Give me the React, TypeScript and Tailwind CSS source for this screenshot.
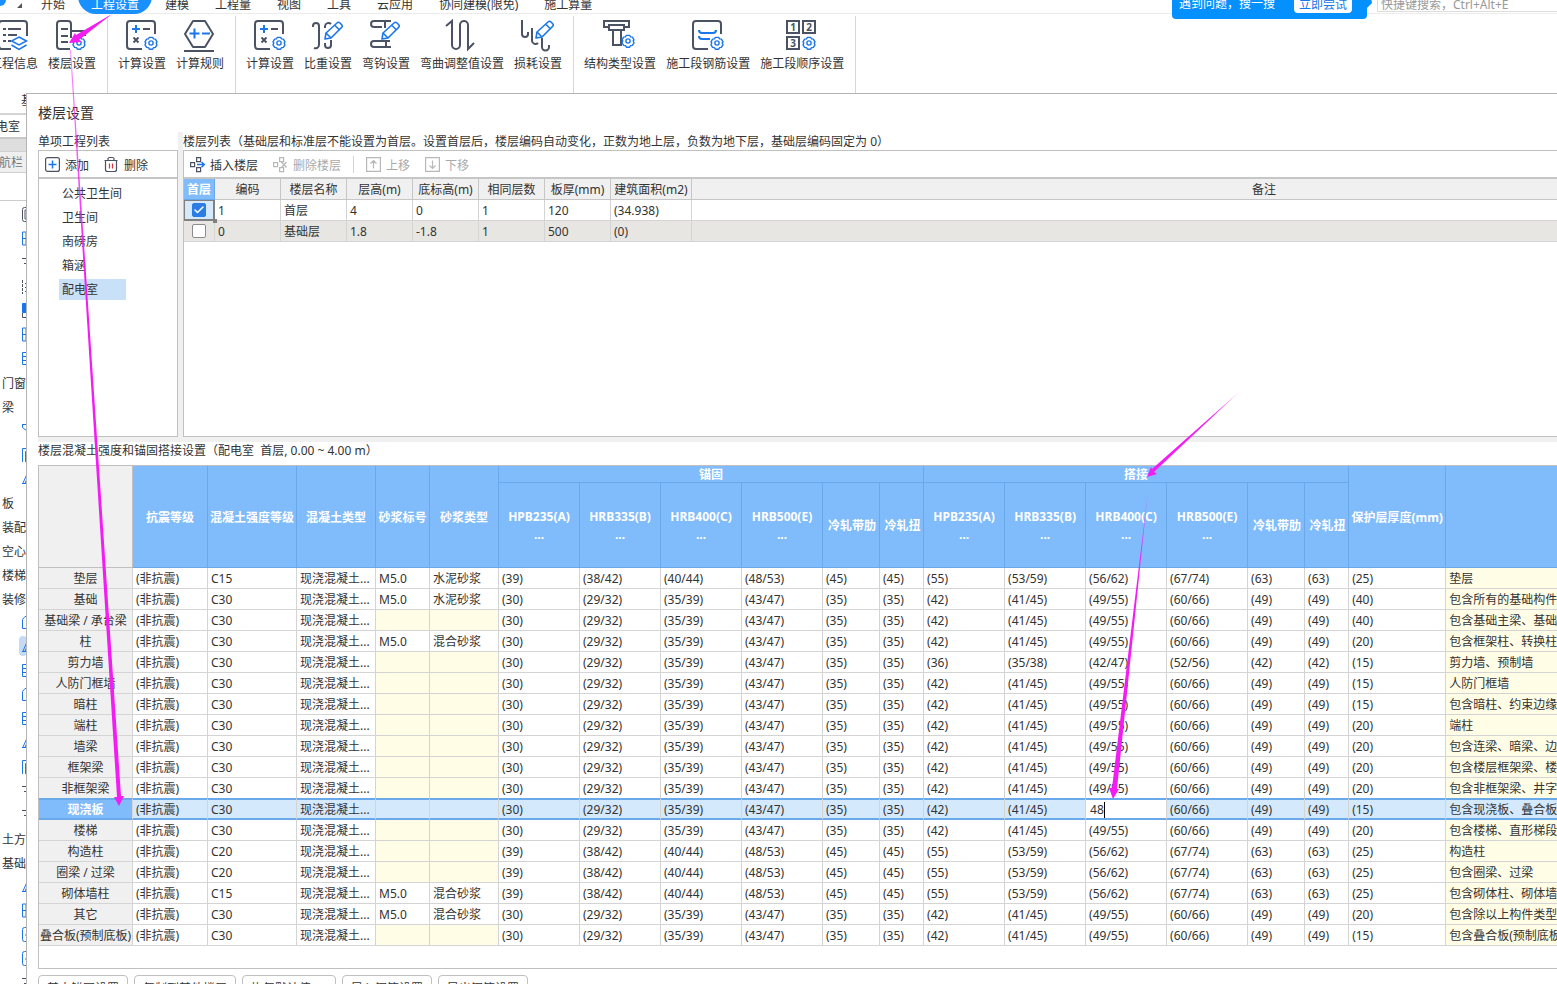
import { ReactNode, useState } from "react";
import clsx from "clsx";
import { Check } from "lucide-react";

const DARK = "#4b5263";
const BLUE = "#1a76ea";

const MENU = ["开始", "工程设置", "建模", "工程量", "视图", "工具", "云应用", "协同建模(限免)", "施工算量"];
const PROJECTS = ["公共卫生间", "卫生间", "南磅房", "箱涵", "配电室"];

// ---------- icons ----------

function Icon({ children, size = 30 }: { children: ReactNode; size?: number }) {
  return (
    <svg
      width={size}
      height={size}
      viewBox={`0 0 ${size} ${size}`}
      fill="none"
      stroke={DARK}
      strokeWidth={size === 30 ? 2 : 1.2}
      className="shrink-0 overflow-visible"
      aria-hidden="true"
    >
      {children}
    </svg>
  );
}

function Gear({ x, y }: { x: number; y: number }) {
  return (
    <g transform={`translate(${x} ${y})`} stroke={BLUE} strokeWidth="1.4" strokeLinejoin="round">
      <path d="M-1.6-5.6h3.2l1 1.5 1.8.2 1.6 2.8-.8 1.1.8 1.8-1.6 2.6-1.8.2-1 1.6h-3.2l-1-1.6-1.8-.2L-6 1.8-5.2 0-6-1.1l1.6-2.8 1.8-.2z" />
      <circle r="2.1" />
    </g>
  );
}

function Pencil({ x, y }: { x: number; y: number }) {
  return (
    <g transform={`translate(${x} ${y})`} stroke={BLUE} strokeWidth="1.6" strokeLinejoin="round">
      <path fill="#fff" d="M0 17l1-6L12 1q1.500-1.500 3 0l1.500 1.500q1.500 1.500 0 3L6 16z" />
      <path d="M10 3.500l4.500 4.500M1 11l5 5" />
    </g>
  );
}

const OPEN_BOX = "M29 14V4a3 3 0 0 0-3-3H4a3 3 0 0 0-3 3v22a3 3 0 0 0 3 3h12";

const calcIcon = (
  <Icon>
    <path d={OPEN_BOX} />
    <path d="M7.500 17.500l5 5M12.500 17.500l-5 5M17 9h7" />
    <path stroke={BLUE} d="M6 9h8M10 5v8" />
    <Gear x={25} y={23} />
  </Icon>
);

type Tool = { label: string; icon: ReactNode };

const RIBBON: Tool[][] = [
  [
    {
      label: "工程信息",
      icon: (
        <Icon>
          <path d="M29 16V4a3 3 0 0 0-3-3H4a3 3 0 0 0-3 3v22a3 3 0 0 0 3 3h9" />
          <path d="M5 9h3M10 9h13M5 15h3M10 15h9M5 21h3M10 21h3" />
          <path stroke={BLUE} strokeWidth="1.5" d="M21 17l7.500 4-7.500 4-7.500-4zM13.500 25l7.500 4.500 7.500-4.500" />
        </Icon>
      ),
    },
    {
      label: "楼层设置",
      icon: (
        <Icon>
          <path d="M14 29H4a3 3 0 0 1-3-3V4a3 3 0 0 1 3-3h8a3 3 0 0 1 3 3v14M15 11h12a2 2 0 0 1 2 2v3M5 9h7M5 16h7M5 22h7" />
          <Gear x={23} y={23} />
        </Icon>
      ),
    },
  ],
  [
    { label: "计算设置", icon: calcIcon },
    {
      label: "计算规则",
      icon: (
        <Icon>
          <path strokeLinejoin="round" d="M9 1h12l8 13-8 13H9L1 14zM0 31h30" />
          <path d="M5.500 13.500h10M10.500 8.500v10M18 13.500h8" stroke={BLUE} />
        </Icon>
      ),
    },
  ],
  [
    { label: "计算设置", icon: calcIcon },
    {
      label: "比重设置",
      icon: (
        <Icon>
          <path d="M1 7V6a3 3 0 0 1 6 0v19a3.500 3.500 0 0 1-5 3M13 8V6a3.500 3.500 0 0 1 6-2M19 20v5a3 3 0 0 1-6 0v-2" />
          <Pencil x={13} y={2} />
        </Icon>
      ),
    },
    {
      label: "弯钩设置",
      icon: (
        <Icon>
          <path d="M9 1H4a3 3 0 0 0 0 6h8M8 1h13M15 1v7M12 21H4a3 3 0 0 0 0 6h7M11 21h9M16 21v6M11 27h10" />
          <Pencil x={12} y={2} />
        </Icon>
      ),
    },
    {
      label: "弯曲调整值设置",
      icon: (
        <Icon>
          <path d="M0 6l6-5v24a4 4 0 0 0 8 0V5a4 4 0 0 1 8 0v24l6-6" />
        </Icon>
      ),
    },
    {
      label: "损耗设置",
      icon: (
        <Icon>
          <path d="M0 0v14a3 3 0 0 0 6 0v-2M10 8v13a3.500 3.500 0 0 0 6 2M20 18v9a3.500 3.500 0 0 0 7 0v-2" />
          <Pencil x={14} y={1} />
        </Icon>
      ),
    },
  ],
  [
    {
      label: "结构类型设置",
      icon: (
        <Icon>
          <path d="M5 7H0V1h25v6h-5M5 5h15v5H5zM9 10v15h8V10" />
          <Gear x={24} y={21} />
        </Icon>
      ),
    },
    {
      label: "施工段钢筋设置",
      icon: (
        <Icon>
          <path d={OPEN_BOX} />
          <path stroke={BLUE} d="M7 10q0 3 3 3h11q3 0 3-3M7 16q0 3 3 3h8" />
          <Gear x={25} y={23} />
        </Icon>
      ),
    },
    {
      label: "施工段顺序设置",
      icon: (
        <Icon>
          <path d="M1 1h12v12H1zM17 1h12v12H17zM1 17h12v12H1z" />
          <g fill={DARK} stroke="none" fontSize="10" fontWeight="700" textAnchor="middle">
            <text x="7" y="11">1</text>
            <text x="23" y="11">2</text>
            <text x="7" y="27">3</text>
          </g>
          <Gear x={23} y={23} />
        </Icon>
      ),
    },
  ],
];

// glyphs of the component tree, only their left edge shows beside the dialog
const TREE_GLYPHS: Record<string, ReactNode> = {
  box: <path stroke={DARK} d="M12 .5H2.500a2 2 0 0 0-2 2v10a2 2 0 0 0 2 2H12M3 3h9v9H3z" />,
  grid: <path d="M12 1H.5v13H12M.5 7.500H12M4 1v13" />,
  tee: <path stroke={DARK} d="M0 3.500h12M2 8.500h8M5 3v9" />,
  dots: <path stroke={DARK} d="M.5 1v14M3 4.500h9M3 8.500h9M3 12.500h9" strokeDasharray="3 1" />,
  fill: (
    <>
      <path fill={BLUE} d="M.5.500H12v9H.5z" />
      <path stroke={DARK} d="M.5 10v4.500H12" />
    </>
  ),
  rows: <path d="M12 1.500H.5v12H12M.5 5.500H12M.5 9.500H12" />,
  funnel: <path d="M0 1.500h12M.5 1.500v3l4 3v8" />,
  door: <path d="M.5 15V1.500H12M3.500 15V4.500H12" />,
  slope: <path d="M0 12.500h12M1 12l4-9M3 12l3-6" />,
  page: <path d="M12 1.500H3l-2.500 3v9H12" />,
  card: <path d="M12 .5H2.500a2 2 0 0 0-2 2v10a2 2 0 0 0 2 2H12M3 8h2" />,
};

const TREE = [
  "#box", "#grid", "#tee", "#dots", "#fill", "#grid", "#rows", "门窗", "梁", "#funnel", "#door", "#slope",
  "板", "装配", "空心", "楼梯", "装修", "#page", "#slope*", "#rows", "#page", "#rows", "#slope", "#door",
  "#tee", "#tee", "土方", "基础", "#slope", "#grid", "#card", "#card", "#tee",
];

// ---------- table data ----------

const FLOOR_COLS = ["编码", "楼层名称", "层高(m)", "底标高(m)", "相同层数", "板厚(mm)", "建筑面积(m2)", "备注"];
const FLOORS = [
  ["1", "首层", "4", "0", "1", "120", "(34.938)", ""],
  ["0", "基础层", "1.8", "-1.8", "1", "500", "(0)", ""],
];

const STEEL = ["HPB235(A)", "HRB335(B)", "HRB400(C)", "HRB500(E)", "冷轧带肋", "冷轧扭"];
const A30 = ["(30)", "(29/32)", "(35/39)", "(43/47)", "(35)", "(35)"];
const A39 = ["(39)", "(38/42)", "(40/44)", "(48/53)", "(45)", "(45)"];
const L36 = ["(36)", "(35/38)", "(42/47)", "(52/56)", "(42)", "(42)"];
const L42 = ["(42)", "(41/45)", "(49/55)", "(60/66)", "(49)", "(49)"];
const L55 = ["(55)", "(53/59)", "(56/62)", "(67/74)", "(63)", "(63)"];

type Member = {
  name: string;
  grade: string;
  mortar?: string;
  anchor: string[];
  lap: string[];
  cover: string;
  note: string;
};

const MEMBERS: Member[] = [
  { name: "垫层", grade: "C15", mortar: "水泥砂浆", anchor: A39, lap: L55, cover: "(25)", note: "垫层" },
  { name: "基础", grade: "C30", mortar: "水泥砂浆", anchor: A30, lap: L42, cover: "(40)", note: "包含所有的基础构件" },
  { name: "基础梁 / 承台梁", grade: "C30", anchor: A30, lap: L42, cover: "(40)", note: "包含基础主梁、基础" },
  { name: "柱", grade: "C30", mortar: "混合砂浆", anchor: A30, lap: L42, cover: "(20)", note: "包含框架柱、转换柱" },
  { name: "剪力墙", grade: "C30", anchor: A30, lap: L36, cover: "(15)", note: "剪力墙、预制墙" },
  { name: "人防门框墙", grade: "C30", anchor: A30, lap: L42, cover: "(15)", note: "人防门框墙" },
  { name: "暗柱", grade: "C30", anchor: A30, lap: L42, cover: "(15)", note: "包含暗柱、约束边缘" },
  { name: "端柱", grade: "C30", anchor: A30, lap: L42, cover: "(20)", note: "端柱" },
  { name: "墙梁", grade: "C30", anchor: A30, lap: L42, cover: "(20)", note: "包含连梁、暗梁、边" },
  { name: "框架梁", grade: "C30", anchor: A30, lap: L42, cover: "(20)", note: "包含楼层框架梁、楼" },
  { name: "非框架梁", grade: "C30", anchor: A30, lap: L42, cover: "(20)", note: "包含非框架梁、井字" },
  { name: "现浇板", grade: "C30", anchor: A30, lap: L42, cover: "(15)", note: "包含现浇板、叠合板" },
  { name: "楼梯", grade: "C30", anchor: A30, lap: L42, cover: "(20)", note: "包含楼梯、直形梯段" },
  { name: "构造柱", grade: "C20", anchor: A39, lap: L55, cover: "(25)", note: "构造柱" },
  { name: "圈梁 / 过梁", grade: "C20", anchor: A39, lap: L55, cover: "(25)", note: "包含圈梁、过梁" },
  { name: "砌体墙柱", grade: "C15", mortar: "混合砂浆", anchor: A39, lap: L55, cover: "(25)", note: "包含砌体柱、砌体墙" },
  { name: "其它", grade: "C30", mortar: "混合砂浆", anchor: A30, lap: L42, cover: "(20)", note: "包含除以上构件类型" },
  { name: "叠合板(预制底板)", grade: "C30", anchor: A30, lap: L42, cover: "(15)", note: "包含叠合板(预制底板)" },
];

const ACTIVE = 11;
const ACTIONS = ["基本锚固设置", "复制到其他楼层", "恢复默认值(D)", "导入钢筋设置", "导出钢筋设置"];

function TopBar() {
  return (
    <header className="flex h-3.5 shrink-0 border-b border-[#ececec]">
      <div className="flex w-7 shrink-0 items-start">
        <span className="h-1.5 w-1.5 rounded-br-full bg-[#1890ff]" />
        <svg width="5" height="5" viewBox="0 0 5 5" className="mt-[3px] ml-[11px]" aria-hidden="true">
          <path d="M5 0v5H0z" fill="#555" />
        </svg>
      </div>
      <nav className="-mt-1 flex h-[18px] shrink-0">
        {MENU.map((m) => (
          <button
            key={m}
            className={clsx(
              "px-[13px] leading-[18px] whitespace-nowrap",
              m === "工程设置" && "rounded-b-full bg-[#1890ff] text-white",
            )}
          >
            {m}
          </button>
        ))}
      </nav>
      <div className="z-10 ml-auto flex h-[19px] shrink-0">
        <div className="flex items-start rounded-b-sm bg-[#0590ff] pr-[15px] pl-[7px] text-white">
          <span className="-mt-1 leading-4">遇到问题，搜一搜</span>
          <button className="-mt-1 ml-[19px] h-[17px] rounded-sm bg-white px-[5px] leading-4 text-[#1677e8]">
            立即尝试
          </button>
        </div>
        <svg width="5" height="8" viewBox="0 0 5 8" aria-hidden="true">
          <path d="M0 0h4.500l.5 3-5 5z" fill="#0590ff" />
        </svg>
        <input
          aria-label="快捷键搜索"
          placeholder="快捷键搜索，Ctrl+Alt+E"
          className="-mt-2 ml-[5px] h-5 w-[180px] border border-r-0 border-[#ddd] bg-white px-[3px] pt-1 placeholder:text-[#999]"
        />
      </div>
    </header>
  );
}

function Ribbon() {
  return (
    <div className="flex h-[79px] shrink-0 pt-0.5">
      {RIBBON.map((group, i) => (
        <div
          key={i}
          className={clsx(
            "flex shrink-0 justify-end border-r border-[#d6d6d6] pr-1.5 pl-[5px]",
            i === 0 && "w-[108px] overflow-hidden",
          )}
        >
          {group.map((t) => (
            <button key={t.label} className="flex shrink-0 flex-col items-center px-[5px] pt-1">
              <span className="pr-0.5">{t.icon}</span>
              <span className="mt-[5px] leading-[18px] whitespace-nowrap">{t.label}</span>
            </button>
          ))}
        </div>
      ))}
    </div>
  );
}

function Sidebar() {
  return (
    <aside className="w-[26px] shrink-0 overflow-hidden whitespace-nowrap">
      <div className="h-5 pt-px pl-[21px] leading-[14px]">基</div>
      <div className="h-[26px] border-y-2 border-t-[#d4d4d4] border-b-[#c8c8c8] leading-[23px]">
        <span className="-ml-1">电室</span>
      </div>
      <div className="h-3 bg-[#dedede]" />
      <div className="h-[22px] border-y border-[#cfcfcf] bg-[#efefef] leading-[21px] text-[#777]">
        <span className="-ml-px">航栏</span>
      </div>
      <div className="h-7 border-b border-[#ccc]" />
      <ul className="pt-[3px]">
        {TREE.map((t, i) =>
          t[0] === "#" ? (
            <li key={i} className="flex h-6 items-start">
              <span className={clsx("ml-[19px] flex h-5 w-2 items-center rounded-sm pl-[3px]", t.endsWith("*") && "bg-[#c5dbf5]")}>
                <svg width="12" height="15" viewBox="0 0 12 15" fill="none" stroke={BLUE} className="shrink-0" aria-hidden="true">
                  {TREE_GLYPHS[t.replace(/[#*]/g, "")]}
                </svg>
              </span>
            </li>
          ) : (
            <li key={i} className="h-6 pl-0.5 leading-6">
              {t}
            </li>
          ),
        )}
      </ul>
    </aside>
  );
}

function ToolButton({ label, disabled, children }: { label: string; disabled?: boolean; children: ReactNode }) {
  return (
    <button disabled={disabled} className="flex shrink-0 items-center gap-[5px] whitespace-nowrap disabled:text-[#aaa]">
      <Icon size={15}>{children}</Icon>
      <span className="pt-1">{label}</span>
    </button>
  );
}

function ProjectList() {
  const [selected, setSelected] = useState("配电室");
  return (
    <section className="flex w-[140px] shrink-0 flex-col">
      <h2 className="h-[18px] leading-5">单项工程列表</h2>
      <div className="flex flex-1 flex-col border border-[#c0c0c0]">
        <div className="flex h-7 items-center gap-[15px] border-b-2 border-[#c6c6c6] pl-1.5">
          <ToolButton label="添加">
            <rect x=".6" y=".6" width="13.800" height="13.800" rx="2" />
            <path stroke={BLUE} strokeWidth="1.5" d="M3.500 7.500h8M7.500 3.500v8" />
          </ToolButton>
          <ToolButton label="删除">
            <path d="M.5 3.500h13M4 3.500V2a1.500 1.500 0 0 1 1.500-1.500h3A1.500 1.500 0 0 1 10 2v1.500M1.500 3.500v9a2 2 0 0 0 2 2h7a2 2 0 0 0 2-2v-9" />
            <path stroke="#d9363e" d="M5.500 6.500v5M8.500 6.500v5" />
          </ToolButton>
        </div>
        <ul className="pt-0.5 pl-5">
          {PROJECTS.map((p) => (
            <li key={p} className="flex h-6 items-center">
              <button
                onClick={() => setSelected(p)}
                className={clsx("h-[21px] min-w-[67px] px-[3px] pt-0.5 text-left", selected === p && "bg-[#c9e0f9]")}
              >
                {p}
              </button>
            </li>
          ))}
        </ul>
      </div>
    </section>
  );
}

function FloorList() {
  const [first, setFirst] = useState(0);
  return (
    <section className="flex min-w-0 flex-1 flex-col">
      <h2 className="h-[18px] leading-5 whitespace-nowrap">
        楼层列表（基础层和标准层不能设置为首层。设置首层后，楼层编码自动变化，正数为地上层，负数为地下层，基础层编码固定为 0）
      </h2>
      <div className="flex-1 overflow-hidden border border-r-0 border-[#c0c0c0]">
        <div className="flex h-7 items-center gap-[15px] border-b-2 border-[#c6c6c6] pl-1.5">
          <ToolButton label="插入楼层">
            <path d="M.6 5.600h4v4h-4zM6.600.6h4v4h-4zM6.600 10.600h4v4h-4z" />
            <path stroke={BLUE} strokeWidth="1.500" d="M7 7.600h7M11.500 5l2.800 2.600-2.800 2.600" />
          </ToolButton>
          <ToolButton label="删除楼层" disabled>
            <path stroke="#b8b8b8" d="M.6 5.600h4v4h-4zM6.600.6h4v4h-4zM6.600 10.600h4v4h-4zM8.500 5l5 5.500M13.500 5l-5 5.500" />
          </ToolButton>
          <span className="-mx-[3px] h-[17px] w-px bg-[#d4d4d4]" />
          <ToolButton label="上移" disabled>
            <path stroke="#b8b8b8" d="M.6.6h13.800v13.800H.6zM7.500 11.500v-8M4.500 6.500l3-3 3 3" />
          </ToolButton>
          <ToolButton label="下移" disabled>
            <path stroke="#b8b8b8" d="M.6.6h13.800v13.800H.6zM7.500 3.500v8M4.500 8.500l3 3 3-3" />
          </ToolButton>
        </div>
        {/* wider than the panel, the remark column scrolls out on the right */}
        <table className="w-[1653px] table-fixed border-separate border-spacing-0">
          <colgroup>
            <col className="w-[31px]" />
            {FLOOR_COLS.map((c) => (
              <col key={c} className={c === "备注" ? "w-auto" : c === "建筑面积(m2)" ? "w-[81px]" : "w-[66px]"} />
            ))}
          </colgroup>
          <thead>
            <tr className="h-[21px]">
              <th className="border-r border-b border-[#6aa9e9] bg-[#80bbfb] p-0 pt-0.5 font-bold text-white">首层</th>
              {FLOOR_COLS.map((c) => (
                <th key={c} className="border-r border-b border-[#c6c6c6] bg-[#f0f0f0] p-0 pt-0.5 font-normal whitespace-nowrap">
                  {c}
                </th>
              ))}
            </tr>
          </thead>
          <tbody>
            {FLOORS.map((row, i) => (
              <tr key={row[1]} className={clsx("h-[21px]", i === 1 && "bg-[#e8e6e2]")}>
                <td
                  className={clsx(
                    "relative border-r border-b p-0",
                    i === 0
                      ? "border-[#808080] bg-[#d5e9fd] shadow-[inset_-1px_-1px_0_#808080,inset_1px_1px_0_#808080]"
                      : "border-[#d4d4d4]",
                  )}
                >
                  <label className="relative mx-auto block h-3.5 w-3.5">
                    <input
                      type="checkbox"
                      aria-label={row[1]}
                      checked={first === i}
                      onChange={() => setFirst(i)}
                      className="block h-3.5 w-3.5 appearance-none rounded-xs border border-[#8c8c8c] bg-white checked:border-[#2b7de3] checked:bg-[#2b7de3]"
                    />
                    {first === i && (
                      <Check size={12} strokeWidth={3} className="pointer-events-none absolute top-px left-px text-white" />
                    )}
                  </label>
                  {i === 0 && <span className="absolute -right-[3px] -bottom-[3px] z-10 h-1 w-1 bg-[#808080]" />}
                </td>
                {row.map((v, j) => (
                  <td key={j} className="border-r border-b border-[#d4d4d4] p-0 pt-0.5 pl-[3px]">
                    {v}
                  </td>
                ))}
              </tr>
            ))}
          </tbody>
        </table>
      </div>
    </section>
  );
}

function HeadCell({ children, span, rows }: { children?: ReactNode; span?: number; rows?: number }) {
  return (
    <th
      colSpan={span}
      rowSpan={rows}
      className="border-r border-b border-[#6aa9e9] bg-[#80bbfb] p-0 pt-0.5 font-bold whitespace-nowrap text-white"
    >
      {children}
    </th>
  );
}

function StrengthTable() {
  const [lapC, setLapC] = useState("48");
  const steelCols = (key: string) =>
    STEEL.map((s, i) => <col key={key + s} className={i < 4 ? "w-[81px]" : i === 4 ? "w-[57px]" : "w-[44px]"} />);

  return (
    <div className="border border-r-0 border-[#c0c0c0] pb-[22px]">
      <table className="w-full table-fixed border-separate border-spacing-0">
        <colgroup>
          <col className="w-[94px]" />
          <col className="w-[75px]" />
          <col className="w-[89px]" />
          <col className="w-[79px]" />
          <col className="w-[54px]" />
          <col className="w-[69px]" />
          {steelCols("a")}
          {steelCols("l")}
          <col className="w-[97px]" />
          <col />
        </colgroup>
        <thead>
          <tr className="h-[17px] leading-[14px]">
            <th rowSpan={2} className="border-r border-b border-[#c0c0c0] bg-[#f0f0f0]" />
            <HeadCell rows={2}>抗震等级</HeadCell>
            <HeadCell rows={2}>混凝土强度等级</HeadCell>
            <HeadCell rows={2}>混凝土类型</HeadCell>
            <HeadCell rows={2}>砂浆标号</HeadCell>
            <HeadCell rows={2}>砂浆类型</HeadCell>
            <HeadCell span={6}>锚固</HeadCell>
            <HeadCell span={6}>搭接</HeadCell>
            <HeadCell rows={2}>保护层厚度(mm)</HeadCell>
            <th rowSpan={2} className="border-b border-[#6aa9e9] bg-[#80bbfb]" />
          </tr>
          <tr className="h-[85px] leading-[18px]">
            {[...STEEL, ...STEEL].map((s, i) => (
              <HeadCell key={i}>
                <span className={clsx("block", i % 6 > 3 && "pl-0.5")}>{s}</span>
                {i % 6 < 4 && <span className="block">...</span>}
              </HeadCell>
            ))}
          </tr>
        </thead>
        <tbody>
          {MEMBERS.map((m, r) => {
            const on = r === ACTIVE;
            const line = clsx(
              "overflow-hidden border-r border-b border-r-[#d4d4d4] p-0 pt-0.5 whitespace-nowrap last:border-r-0",
              on || r === ACTIVE - 1 ? "border-b-[#6aa9e9]" : "border-b-[#d4d4d4]",
              on && "shadow-[inset_0_1px_0_#6aa9e9,inset_0_-1px_0_#6aa9e9]",
            );
            const cell = clsx(line, "pl-[3px]", on && "bg-[#d5e9fd]");
            const locked = clsx(line, "pl-[3px]", on ? "bg-[#d5e9fd]" : "bg-[#fffde6]");
            return (
              <tr key={m.name} className="h-[21px]">
                <th
                  className={clsx(
                    line,
                    on ? "bg-[#80bbfb] font-bold text-white" : "border-r-[#c0c0c0] bg-[#f0f0f0] font-normal",
                  )}
                >
                  {m.name}
                </th>
                <td className={cell}>(非抗震)</td>
                <td className={cell}>{m.grade}</td>
                <td className={cell}>现浇混凝土...</td>
                <td className={m.mortar ? cell : locked}>{m.mortar && "M5.0"}</td>
                <td className={m.mortar ? cell : locked}>{m.mortar}</td>
                {m.anchor.map((v, i) => (
                  <td key={i} className={cell}>
                    {v}
                  </td>
                ))}
                {m.lap.map((v, i) =>
                  on && i === 2 ? (
                    <td key={i} className={clsx(line, "bg-white pl-1")}>
                      <span className="flex items-center">
                        <input
                          aria-label="搭接 HRB400(C)"
                          value={lapC}
                          onChange={(e) => setLapC(e.target.value)}
                          className="h-4 w-3.5 outline-none"
                        />
                        <span className="h-4 w-px bg-black" />
                      </span>
                    </td>
                  ) : (
                    <td key={i} className={cell}>
                      {v}
                    </td>
                  ),
                )}
                <td className={cell}>{m.cover}</td>
                <td className={locked}>{m.note}</td>
              </tr>
            );
          })}
        </tbody>
      </table>
    </div>
  );
}

// hand-drawn annotation arrows, thin at the tail and thick at the head
function Arrows() {
  return (
    <svg className="pointer-events-none absolute top-0 left-0 z-20" width="1557" height="984" fill="#f31cf3" aria-hidden="true">
      <defs>
        <linearGradient id="fade" x1="0" y1="0" x2="0" y2="1">
          <stop offset="0" stopColor="#f31cf3" stopOpacity=".5" />
          <stop offset=".3" stopColor="#f31cf3" />
        </linearGradient>
      </defs>
      <path d="M112 14L76 35l-1-2-6 10 13-1-3-2z" />
      <path fill="url(#fade)" d="M70 50l1 0L121 796h3l-5 10-5-9h3z" />
      <path fill="url(#fade)" d="M1239 392l-85 80 3 2-10 3 4-10 1 2z" />
      <path fill="url(#fade)" d="M1148 491l-31 298h2l-6 10-4-11h3z" />
    </svg>
  );
}

export default function App() {
  return (
    <div className="relative flex h-screen flex-col overflow-hidden bg-white font-['Noto_Sans','Noto_Sans_CJK_SC',sans-serif] text-xs text-[#333]">
      <TopBar />
      <Ribbon />
      <div className="flex min-h-0 flex-1">
        <Sidebar />
        <main className="min-w-0 flex-1 overflow-hidden border-t border-l border-[#b4b4b4] pl-[11px]">
          <h1 className="h-[38px] text-sm leading-[38px]">楼层设置</h1>
          <div className="flex h-[305px]">
            <ProjectList />
            <div className="w-[5px] shrink-0 bg-[#f0f0f0]" />
            <FloorList />
          </div>
          <div className="h-[5px] bg-[#f0f0f0]" />
          <h2 className="mb-[5px] h-[18px] leading-[18px] whitespace-pre">
            {"楼层混凝土强度和锚固搭接设置（配电室  首层, 0.00 ~ 4.00 m）"}
          </h2>
          <StrengthTable />
          <div className="flex gap-1.5 pt-1.5">
            {ACTIONS.map((a) => (
              <button key={a} className="h-7 rounded-sm border border-[#c0c0c0] px-2 whitespace-nowrap">
                {a}
              </button>
            ))}
          </div>
        </main>
      </div>
      <Arrows />
    </div>
  );
}
